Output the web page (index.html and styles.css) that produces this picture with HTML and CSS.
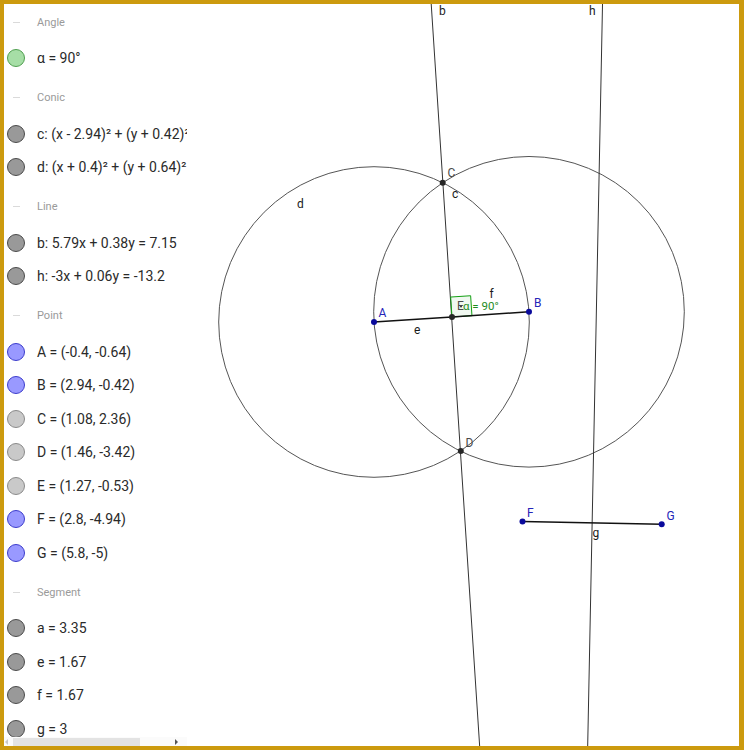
FILE: index.html
```html
<!DOCTYPE html>
<html>
<head>
<meta charset="utf-8">
<link rel="stylesheet" href="styles.css">
</head>
<body>
<div class="applet">
  <div class="algebra">
    <div class="list">
      <div class="head"><span class="dash"></span><span>Angle</span></div>
      <div class="item"><span class="tog t-green"></span><span>α = 90°</span></div>
      <div class="head"><span class="dash"></span><span>Conic</span></div>
      <div class="item"><span class="tog t-dark"></span><span>c: (x - 2.94)² + (y + 0.42)² = 11.19</span></div>
      <div class="item"><span class="tog t-dark"></span><span>d: (x + 0.4)² + (y + 0.64)² = 11.19</span></div>
      <div class="head"><span class="dash"></span><span>Line</span></div>
      <div class="item"><span class="tog t-dark"></span><span>b: 5.79x + 0.38y = 7.15</span></div>
      <div class="item"><span class="tog t-dark"></span><span>h: -3x + 0.06y = -13.2</span></div>
      <div class="head"><span class="dash"></span><span>Point</span></div>
      <div class="item"><span class="tog t-blue"></span><span>A = (-0.4, -0.64)</span></div>
      <div class="item"><span class="tog t-blue"></span><span>B = (2.94, -0.42)</span></div>
      <div class="item"><span class="tog t-light"></span><span>C = (1.08, 2.36)</span></div>
      <div class="item"><span class="tog t-light"></span><span>D = (1.46, -3.42)</span></div>
      <div class="item"><span class="tog t-light"></span><span>E = (1.27, -0.53)</span></div>
      <div class="item"><span class="tog t-blue"></span><span>F = (2.8, -4.94)</span></div>
      <div class="item"><span class="tog t-blue"></span><span>G = (5.8, -5)</span></div>
      <div class="head"><span class="dash"></span><span>Segment</span></div>
      <div class="item"><span class="tog t-dark"></span><span>a = 3.35</span></div>
      <div class="item"><span class="tog t-dark"></span><span>e = 1.67</span></div>
      <div class="item"><span class="tog t-dark"></span><span>f = 1.67</span></div>
      <div class="item"><span class="tog t-dark"></span><span>g = 3</span></div>
    </div>
    <div class="hscroll">
      <span class="arr arr-l"></span>
      <span class="thumb"></span>
      <span class="arr arr-r"></span>
    </div>
  </div>
  <div class="graphics">
    <svg class="canvas" width="552" height="742" viewBox="187 4 552 742" xmlns="http://www.w3.org/2000/svg">
      <circle cx="374" cy="322" r="155.3" fill="none" stroke="#555" stroke-width="1"/>
      <circle cx="529" cy="311.8" r="155.3" fill="none" stroke="#555" stroke-width="1"/>
      <line x1="430.95" y1="0" x2="479.9" y2="750" stroke="#333" stroke-width="1"/>
      <line x1="602.6" y1="0" x2="587.6" y2="750" stroke="#333" stroke-width="1"/>
      <polygon points="452,317 471.96,315.7 470.63,295.74 450.67,297.04" fill="rgba(0,140,0,0.06)" stroke="#13a013" stroke-width="1"/>
      <line x1="374" y1="322" x2="452" y2="317" stroke="#111" stroke-width="1.5"/>
      <line x1="452" y1="317" x2="529" y2="311.8" stroke="#111" stroke-width="1.5"/>
      <line x1="522.5" y1="521.6" x2="661.7" y2="524.3" stroke="#111" stroke-width="1.5"/>
      <circle cx="461" cy="306.5" r="1" fill="#333"/>
      <circle cx="374" cy="322" r="3" fill="#0a0a9c"/>
      <circle cx="529" cy="311.8" r="3" fill="#0a0a9c"/>
      <circle cx="522.5" cy="521.6" r="3" fill="#0a0a9c"/>
      <circle cx="661.7" cy="524.3" r="3" fill="#0a0a9c"/>
      <circle cx="442.7" cy="182.8" r="3" fill="#262626"/>
      <circle cx="460.8" cy="451" r="3" fill="#262626"/>
      <circle cx="452" cy="317" r="3" fill="#262626"/>
      <g class="lbl">
        <text x="439" y="15">b</text>
        <text x="589" y="15">h</text>
        <text x="452" y="198">c</text>
        <text x="297" y="208">d</text>
        <text x="414" y="334">e</text>
        <text x="489.5" y="298">f</text>
        <text x="592.5" y="537">g</text>
      </g>
      <g class="lbl lbl-gray">
        <text x="447.5" y="177">C</text>
        <text x="465.5" y="446.5">D</text>
        <text x="457" y="310">E</text>
      </g>
      <g class="lbl lbl-blue">
        <text x="378.5" y="316.5">A</text>
        <text x="534" y="307">B</text>
        <text x="527" y="516.5">F</text>
        <text x="666.5" y="519.5">G</text>
      </g>
      <text class="lbl-angle" x="463" y="310">α = 90°</text>
    </svg>
  </div>
</div>
</body>
</html>
```
FILE: styles.css
```css
html, body {
  margin: 0;
  padding: 0;
  background: #ffffff;
}

.applet {
  box-sizing: border-box;
  width: 744px;
  height: 750px;
  border-style: solid;
  border-color: #cc9a0e;
  border-width: 4px 5px 4px 4px;
  display: flex;
  overflow: hidden;
  background: #ffffff;
  font-family: Roboto, "Liberation Sans", sans-serif;
}

.algebra {
  position: relative;
  width: 183px;
  flex: 0 0 183px;
  overflow: hidden;
  white-space: nowrap;
}

.list {
  display: flex;
  flex-direction: column;
  margin-top: -4.75px;
}

.head {
  box-sizing: border-box;
  height: 42px;
  padding-top: 4px;
  display: flex;
  align-items: center;
  font-size: 11px;
  color: #9a9a9a;
  line-height: 13px;
}

.head > span:last-child {
  display: block;
}

.dash {
  display: block;
  width: 7px;
  height: 1px;
  background: #dadada;
  margin-left: 9px;
  margin-right: 17px;
}

.item {
  height: 33.5px;
  display: flex;
  align-items: center;
  font-size: 14px;
  color: #2a2a2a;
}

.tog {
  box-sizing: border-box;
  display: block;
  width: 18px;
  height: 18px;
  border-radius: 50%;
  border: 1px solid #444;
  margin-left: 3px;
  margin-right: 12px;
  flex: 0 0 18px;
}

.t-green { background: #a6dea6; border-color: #4f9f4f; }
.t-dark  { background: #999999; border-color: #4a4a4a; }
.t-blue  { background: #9999ff; border-color: #3c3ccc; }
.t-light { background: #c9c9c9; border-color: #8a8a8a; }

.hscroll {
  position: absolute;
  left: 0;
  right: 0;
  bottom: 0;
  height: 9px;
  background: #fbfbfb;
  display: flex;
  align-items: center;
}

.thumb {
  display: block;
  width: 127px;
  height: 8px;
  background: #e3e3e3;
  margin-left: 5px;
}

.arr {
  display: block;
  width: 0;
  height: 0;
  border-top: 3px solid transparent;
  border-bottom: 3px solid transparent;
}

.arr-l {
  border-right: 3px solid #c8c8c8;
  margin-left: 1px;
}

.arr-r {
  border-left: 3px solid #555;
  margin-left: 35px;
}

.graphics {
  flex: 1 1 auto;
  position: relative;
  overflow: hidden;
}

.canvas {
  display: block;
}

.lbl text {
  font-family: Roboto, "Liberation Sans", sans-serif;
  font-size: 12px;
  fill: #1a1a1a;
}

.lbl-gray text {
  fill: #4a4a4a;
}

.lbl-blue text {
  fill: #2424b8;
}

.lbl-angle {
  font-family: Roboto, "Liberation Sans", sans-serif;
  font-size: 11.5px;
  fill: #1e8c1e;
}
```
